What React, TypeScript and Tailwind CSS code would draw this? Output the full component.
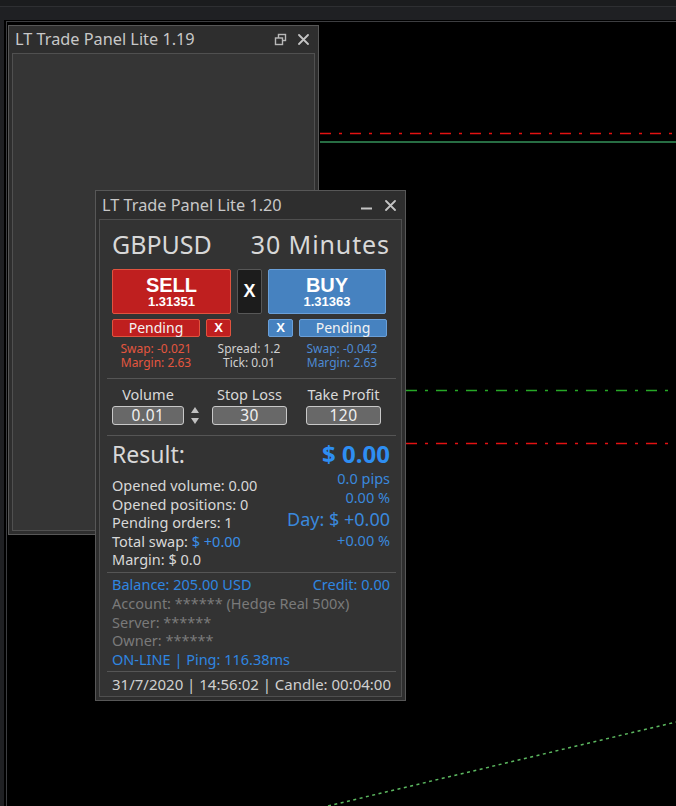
import React from "react";

function CloseIcon() {
  return (
    <svg width="11" height="11" viewBox="0 0 11 11" className="block">
      <path d="M1 1 L10 10 M10 1 L1 10" stroke="#c4c4c4" strokeWidth="1.8" strokeLinecap="round" />
    </svg>
  );
}

function RestoreIcon() {
  return (
    <svg width="13" height="13" viewBox="0 0 13 13" className="block">
      <rect x="4.5" y="1.5" width="7" height="6" fill="none" stroke="#b8b8b8" strokeWidth="1.4" />
      <rect x="1.5" y="5" width="7" height="6.5" fill="#2e2e2e" stroke="#b8b8b8" strokeWidth="1.4" />
    </svg>
  );
}

function MinIcon() {
  return (
    <svg width="13" height="11" viewBox="0 0 13 11" className="block">
      <path d="M1 8.5 L12 8.5" stroke="#c4c4c4" strokeWidth="2" />
    </svg>
  );
}

function ChartLines() {
  return (
    <svg width="676" height="806" className="absolute left-0 top-0 pointer-events-none">
      <line x1="320" y1="133.5" x2="676" y2="133.5" stroke="#e31212" strokeWidth="1.5" strokeDasharray="11 8 3 8" />
      <line x1="320" y1="142" x2="676" y2="142" stroke="#35925a" strokeWidth="1.3" />
      <line x1="406" y1="390.5" x2="676" y2="390.5" stroke="#26a826" strokeWidth="1.4" strokeDasharray="11 8 3 8" />
      <line x1="406" y1="443.5" x2="676" y2="443.5" stroke="#e31212" strokeWidth="1.4" strokeDasharray="11 8 3 8" />
      <line x1="328" y1="806" x2="676" y2="722" stroke="#5cb860" strokeWidth="1.5" strokeDasharray="3 3.5" />
    </svg>
  );
}

function OldPanel() {
  return (
    <div className="absolute left-[8px] top-[25px] w-[311px] h-[510px] border border-[#575757] bg-[#2e2e2e] flex flex-col">
      <div className="h-[27px] flex items-center pl-[6px] pr-[9px] shrink-0">
        <span className="text-[16.3px] leading-none text-[#c8c8c8]">LT Trade Panel Lite 1.19</span>
        <div className="ml-auto flex items-center gap-[11px]">
          <RestoreIcon />
          <CloseIcon />
        </div>
      </div>
      <div className="mx-[3px] mb-[3px] flex-1 border border-[#505050] bg-[#353535]" />
    </div>
  );
}

function NewPanel() {
  return (
    <div className="absolute left-[95px] top-[190px] w-[311px] h-[511px] border border-[#575757] bg-[#2e2e2e] flex flex-col">
      <div className="h-[28px] flex items-center pl-[6px] pr-[9px] shrink-0">
        <span className="text-[16.3px] leading-none text-[#c8c8c8]">LT Trade Panel Lite 1.20</span>
        <div className="ml-auto flex items-center gap-[12px]">
          <MinIcon />
          <CloseIcon />
        </div>
      </div>
      <div className="mx-[3px] mb-[3px] flex-1 border border-[#4f4f4f] bg-[#333333] pl-[7px] pr-[5px] flex flex-col text-[#d8d8d8]">
        {/* header */}
        <div className="mt-[9px] h-[30px] flex items-center justify-between pl-[5px] pr-[6px]">
          <span className="text-[25px] leading-none">GBPUSD</span>
          <span className="text-[25px] leading-none tracking-[0.9px]">30 Minutes</span>
        </div>
        {/* buttons */}
        <div className="mt-[10px] h-[45px] pl-[5px] flex gap-[6px]">
          <div className="w-[119px] rounded-[2px] border border-[#e0533f] bg-[#bf1f1f] flex flex-col items-center justify-center font-['Liberation_Sans',sans-serif] font-bold text-white">
            <span className="text-[20px] leading-[20px]">SELL</span>
            <span className="text-[13px] leading-[14px]">1.31351</span>
          </div>
          <div className="w-[25px] rounded-[2px] border border-[#575757] bg-[#1c1c1c] flex items-center justify-center font-['Liberation_Sans',sans-serif] font-bold text-white text-[18px]">
            X
          </div>
          <div className="w-[118px] rounded-[2px] border border-[#6a9fd8] bg-[#4682c0] flex flex-col items-center justify-center font-['Liberation_Sans',sans-serif] font-bold text-white">
            <span className="text-[20px] leading-[20px]">BUY</span>
            <span className="text-[13px] leading-[14px]">1.31363</span>
          </div>
        </div>
        {/* row 2 */}
        <div className="mt-[5px] h-[18px] pl-[5px] flex">
          <div className="w-[88px] rounded-[2px] border border-[#e0533f] bg-[#bf1f1f] flex items-center justify-center text-[14px] leading-none text-[#f2f2f2]">Pending</div>
          <div className="ml-[6px] w-[25px] rounded-[2px] border border-[#e0533f] bg-[#bf1f1f] flex items-center justify-center font-['Liberation_Sans',sans-serif] font-bold text-[13px] text-white">X</div>
          <div className="ml-[37px] w-[25px] rounded-[2px] border border-[#6a9fd8] bg-[#4682c0] flex items-center justify-center font-['Liberation_Sans',sans-serif] font-bold text-[13px] text-white">X</div>
          <div className="ml-[6px] w-[88px] rounded-[2px] border border-[#6a9fd8] bg-[#4682c0] flex items-center justify-center text-[14px] leading-none text-[#f2f2f2]">Pending</div>
        </div>
        {/* swap rows */}
        <div className="mt-[5px] pl-[5px] w-[279px] flex text-[12px] leading-[14px]">
          <div className="w-[88px] text-center text-[#e4563f]">
            <div>Swap: -0.021</div>
            <div>Margin: 2.63</div>
          </div>
          <div className="flex-1 text-center text-[#d0d0d0]">
            <div>Spread: 1.2</div>
            <div>Tick: 0.01</div>
          </div>
          <div className="w-[88px] text-center text-[#4d8ad4]">
            <div>Swap: -0.042</div>
            <div>Margin: 2.63</div>
          </div>
        </div>
        <div className="mt-[8px] h-px bg-[#555555]" />
        {/* inputs */}
        <div className="mt-[6px] pl-[5px] flex">
          <div className="w-[72px] flex flex-col items-center">
            <span className="h-[18px] text-[14.5px] leading-[18px]">Volume</span>
            <div className="mt-[3px] w-full h-[19px] rounded-[3px] border border-[#c8c8c8] bg-[#686868] flex items-center justify-center text-[15.5px] leading-none tracking-[0.5px] text-[#f0f0f0]">0.01</div>
          </div>
          <div className="ml-[7px] mt-[22px] h-[17px] w-[8px] flex flex-col justify-between">
            <svg width="8" height="6" viewBox="0 0 8 6" className="block"><path d="M0 6 L4 0 L8 6 Z" fill="#c0c0c0" /></svg>
            <svg width="8" height="6" viewBox="0 0 8 6" className="block"><path d="M0 0 L4 6 L8 0 Z" fill="#c0c0c0" /></svg>
          </div>
          <div className="ml-[13px] w-[75px] flex flex-col items-center">
            <span className="h-[18px] text-[14.5px] leading-[18px]">Stop Loss</span>
            <div className="mt-[3px] w-full h-[19px] rounded-[3px] border border-[#c8c8c8] bg-[#686868] flex items-center justify-center text-[15.5px] leading-none tracking-[0.5px] text-[#f0f0f0]">30</div>
          </div>
          <div className="ml-[19px] w-[75px] flex flex-col items-center">
            <span className="h-[18px] text-[14.5px] leading-[18px]">Take Profit</span>
            <div className="mt-[3px] w-full h-[19px] rounded-[3px] border border-[#c8c8c8] bg-[#686868] flex items-center justify-center text-[15.5px] leading-none tracking-[0.5px] text-[#f0f0f0]">120</div>
          </div>
        </div>
        <div className="mt-[10px] h-px bg-[#555555]" />
        {/* result */}
        <div className="pl-[5px] pr-[6px] flex justify-between">
          <div className="flex flex-col">
            <div className="mt-[4px] h-[28px] flex items-center text-[23px] leading-none">Result:</div>
            <div className="mt-[8px] text-[14.5px] leading-[18.5px]">
              <div>Opened volume: 0.00</div>
              <div>Opened positions: 0</div>
              <div>Pending orders: 1</div>
              <div>Total swap: <span className="text-[#3a8ee6]">$ +0.00</span></div>
              <div>Margin: $ 0.0</div>
            </div>
          </div>
          <div className="flex flex-col items-end text-[#3a88dc]">
            <div className="mt-[4px] h-[28px] flex items-center text-[24px] font-bold leading-none text-[#2e8ef2]">$ 0.00</div>
            <div className="mt-[1px] h-[18px] text-[14.5px] leading-[18px]">0.0 pips</div>
            <div className="mt-[0.5px] h-[18px] text-[14.5px] leading-[18px]">0.00 %</div>
            <div className="mt-[2.5px] h-[22px] text-[18px] leading-[22px]">Day: $ +0.00</div>
            <div className="mt-[0.5px] h-[18px] text-[14.5px] leading-[18px]">+0.00 %</div>
          </div>
        </div>
        <div className="mt-[3px] h-px bg-[#555555]" />
        {/* account */}
        <div className="mt-[2.5px] pl-[5px] pr-[6px] text-[14.5px] leading-[18.75px]">
          <div className="flex justify-between text-[#2f86e0]">
            <span>Balance: 205.00 USD</span>
            <span>Credit: 0.00</span>
          </div>
          <div className="text-[#7a7a7a]">Account: ****** (Hedge Real 500x)</div>
          <div className="text-[#7a7a7a]">Server: ******</div>
          <div className="text-[#7a7a7a]">Owner: ******</div>
          <div className="text-[#2f86e0]">ON-LINE | Ping: 116.38ms</div>
        </div>
        <div className="mt-[2.5px] h-px bg-[#555555]" />
        <div className="flex-1 flex items-center pl-[5px] text-[15px] leading-none text-[#d0d0d0]">
          31/7/2020 | 14:56:02 | Candle: 00:04:00
        </div>
      </div>
    </div>
  );
}

export default function App() {
  return (
    <div className="relative w-[676px] h-[806px] overflow-hidden bg-[#1f2023] font-['Noto_Sans',sans-serif] flex flex-col">
      <div className="h-[6px] shrink-0 bg-[#1b1c1e]" />
      <div className="h-px shrink-0 bg-[#2e2f32]" />
      <div className="h-[13px] shrink-0 bg-[#1f2023]" />
      <div className="flex-1 flex">
        <div className="w-[4px] bg-[#1f2023]" />
        <div className="flex-1 bg-black pl-[2px] pt-[1px] flex">
          <div className="flex-1 border-l border-t border-[#3d3e41]" />
        </div>
      </div>
      <ChartLines />
      <OldPanel />
      <NewPanel />
    </div>
  );
}
